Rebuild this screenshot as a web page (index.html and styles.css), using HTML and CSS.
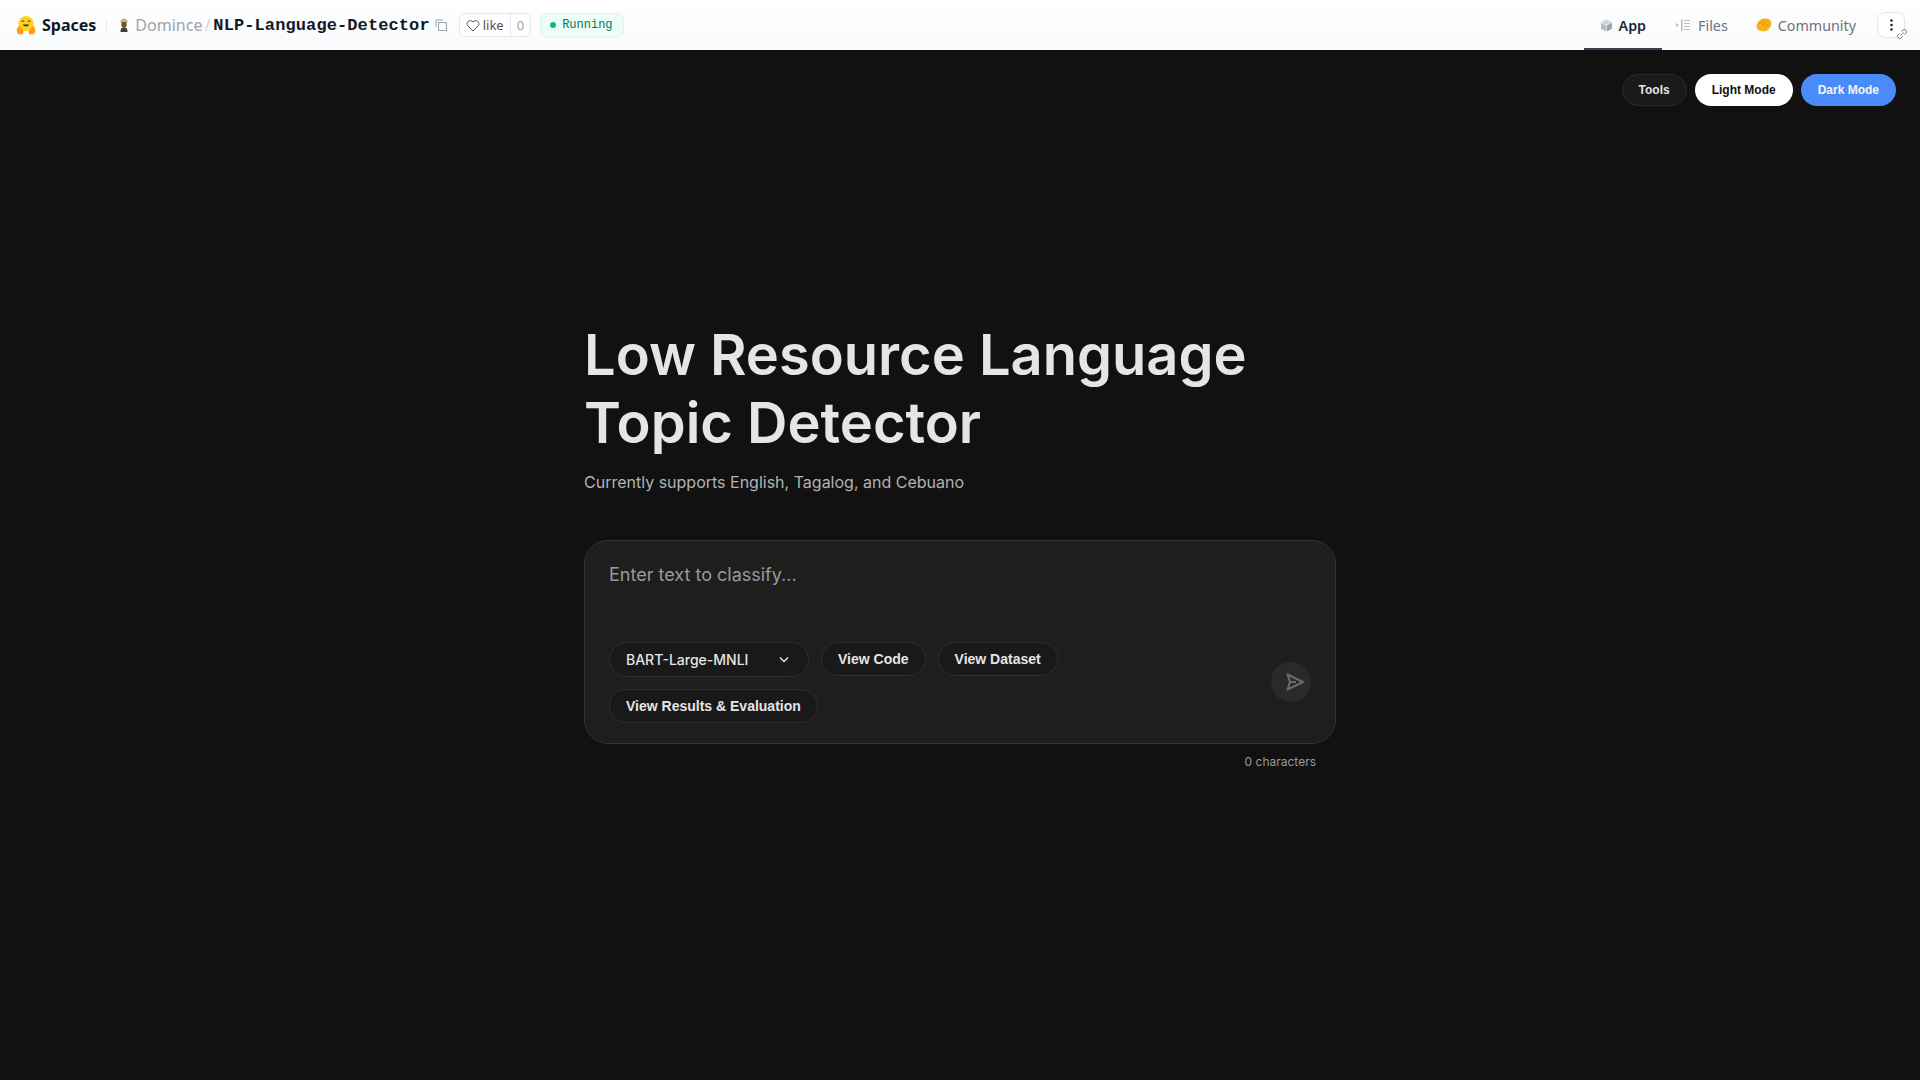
FILE: index.html
```html
<html>
<head>
    <title>Low Resource Language Topic Detector</title>
    <link rel="stylesheet" href="styles.css">
</head>
<body>
    <header class="topbar">
        <div class="topbar-left">
            <a class="brand">
                <svg class="brand-logo" viewBox="0 0 20 20" width="20" height="20">
                    <circle cx="10" cy="8.500" r="7.500" fill="#ffd21e"/>
                    <path d="M.8 15.500C.8 13 2.500 10.500 4 11.500l3.500 4.500-.5 3.200H3C1.500 19.200.8 17 .8 15.500zM19.200 15.500c0-2.500-1.700-5-3.200-4l-3.500 4.500.5 3.200h4c1.500 0 2.200-2.200 2.200-3.700z" fill="#ff9d0b"/>
                    <path d="M5.600 6.800c.3-1.500 2-1.500 2.300 0M12.100 6.800c.3-1.500 2-1.500 2.300 0" fill="none" stroke="#32343d" stroke-width="1"/>
                    <path d="M6.800 9.500c.8 2.600 5.600 2.600 6.400 0z" fill="#32343d"/>
                </svg>
                <span>Spaces</span>
            </a>
            <span class="divider"></span>
            <svg class="avatar" viewBox="0 0 10 14" width="10" height="14">
                <path d="M1.500 14c0-3.500 1-4.500 3.500-4.500s3.500 1 3.500 4.500z" fill="#4a3a2c"/>
                <ellipse cx="5" cy="6.500" rx="2.700" ry="3.300" fill="#6b4f36"/>
                <path d="M1.300 5C1 2 3 .5 5 .5S9 2 8.700 5C7.500 3.800 2.500 3.800 1.300 5z" fill="#c9ad7c"/>
            </svg>
            <span class="owner">Domince</span>
            <span class="slash">/</span>
            <span class="repo">NLP-Language-Detector</span>
            <svg class="copy-icon" viewBox="0 0 12 12" width="12" height="12" fill="none" stroke="#9ca3af" stroke-width="1">
                <rect x="3.500" y="3.500" width="8" height="8"/>
                <path d="M1 8V1h7"/>
            </svg>
            <div class="like">
                <span class="like-label">
                    <svg viewBox="0 0 14 13" width="14" height="13" fill="none" stroke="#4b5563" stroke-width="1">
                        <path d="M7 12L1.700 6.700C-.5 3.500 3.800-.5 7 3c3.200-3.500 7.500.5 5.300 3.700z"/>
                    </svg>
                    like
                </span>
                <span class="like-count">0</span>
            </div>
            <div class="status"><span class="status-dot"></span>Running</div>
        </div>
        <nav class="tabs">
            <a class="tab tab-active">
                <svg viewBox="0 0 12 12" width="13" height="13">
                    <path d="M6 .5l5 2.500L6 5.500 1 3z" fill="#d1d5db"/>
                    <path d="M1 3.500l4.700 2.400v5.600L1 9z" fill="#b6bcc6"/>
                    <path d="M11 3.500L6.300 5.900v5.600L11 9z" fill="#9ca3af"/>
                </svg>
                App
            </a>
            <a class="tab tab-files">
                <svg viewBox="0 0 14 12" width="14" height="12" fill="#b6bcc6">
                    <path d="M0 4l3 2-3 2z"/>
                    <rect x="5" y="0" width="1.500" height="12"/>
                    <rect x="8" y="1" width="6" height="1"/>
                    <rect x="8" y="4" width="6" height="1"/>
                    <rect x="8" y="7" width="6" height="1"/>
                    <rect x="8" y="10" width="6" height="1"/>
                </svg>
                Files
            </a>
            <a class="tab">
                <svg viewBox="0 0 16 14" width="16" height="14">
                    <path d="M.5 9C.3 6 2.500 2.500 5 1.500 7 .3 9.500.2 11.500.8c2 .5 4 2 4 4.200 0 3-2 6-4.500 7.500-1.500 1-4 1-6 .5C2.500 12.500.7 11 .5 9z" fill="#f5b21a"/>
                    <path d="M3.500 6L7 2.500M6 8l4-4.500M8.500 10l4-4.500" stroke="#cf8a08" stroke-width=".9" fill="none"/>
                </svg>
                Community
            </a>
            <div class="more">
                <svg viewBox="0 0 3 12" width="3" height="12" fill="#1f2937">
                    <circle cx="1.500" cy="1.500" r="1.300"/>
                    <circle cx="1.500" cy="6" r="1.300"/>
                    <circle cx="1.500" cy="10.500" r="1.300"/>
                </svg>
                <svg class="link-badge" viewBox="0 0 12 12" width="12" height="12" fill="none" stroke="#6b7280" stroke-width="1">
                    <path d="M4.500 7.500l3-3"/>
                    <path d="M5.500 3.500l1.500-1.500c1.800-1.800 4.800 1.200 3 3L8.500 6.500"/>
                    <path d="M6.500 8.500L5 10c-1.800 1.800-4.800-1.200-3-3l1.500-1.500"/>
                </svg>
            </div>
        </nav>
    </header>

    <main class="app">
        <div class="theme-bar">
            <button class="pill pill-tools">Tools</button>
            <button class="pill pill-light">Light Mode</button>
            <button class="pill pill-dark">Dark Mode</button>
        </div>
        <section class="content">
            <h1>Low Resource Language Topic Detector</h1>
            <p class="subtitle">Currently supports English, Tagalog, and Cebuano</p>
            <div class="card">
                <div class="placeholder">Enter text to classify...</div>
                <div class="card-footer">
                    <div class="actions">
                        <div class="select">
                            <span>BART-Large-MNLI</span>
                            <svg viewBox="0 0 12 8" width="10" height="7" fill="none" stroke="#e5e5e5" stroke-width="1.600">
                                <path d="M1 1.500l5 5 5-5"/>
                            </svg>
                        </div>
                        <button class="action">View Code</button>
                        <button class="action">View Dataset</button>
                        <button class="action">View Results &amp; Evaluation</button>
                    </div>
                    <div class="send">
                        <svg viewBox="0 0 20 20" width="20" height="20" fill="none" stroke="#6b6b6b" stroke-width="2" stroke-linejoin="round">
                            <path d="M2.500 2.500L18 10 2.500 17.500 5 10z"/>
                            <path d="M5 10h6"/>
                        </svg>
                    </div>
                </div>
            </div>
            <div class="counter">0 characters</div>
        </section>
    </main>
</body>
</html>
```

FILE: styles.css
```css
* {
    box-sizing: border-box;
}
body {
    margin: 0;
    height: 1080px;
    overflow: hidden;
    background-color: #111111;
    font-family: Inter, sans-serif;
    display: flex;
    flex-direction: column;
}
.topbar {
    height: 50px;
    flex-shrink: 0;
    background: linear-gradient(#ffffff, #f9fafb);
    display: flex;
    justify-content: space-between;
    padding: 0 15px 0 16px;
    font-family: "Noto Sans", sans-serif;
}
.topbar-left {
    display: flex;
    align-items: center;
}
.brand {
    display: flex;
    align-items: center;
    gap: 6px;
    font-size: 16px;
    font-weight: 700;
    color: #111827;
}
.divider {
    width: 1px;
    height: 10px;
    background-color: #e5e7eb;
    margin: 0 10px;
}
.avatar {
    margin: 0 6px 0 2px;
}
.owner {
    font-size: 16px;
    color: #9ca3af;
}
.slash {
    font-size: 16px;
    color: #d1d5db;
    margin: 0 2px;
}
.repo {
    font-family: "Liberation Mono", monospace;
    font-size: 17px;
    font-weight: 700;
    letter-spacing: 0.1px;
    color: #111827;
    padding-left: 1px;
}
.copy-icon {
    margin-left: 5px;
}
.like {
    display: flex;
    align-items: stretch;
    height: 24px;
    margin-left: 12px;
    border: 1px solid #e5e7eb;
    border-radius: 6px;
    background-color: #ffffff;
    font-size: 13px;
    color: #4b5563;
}
.like-label {
    display: flex;
    align-items: center;
    gap: 3px;
    padding: 0 6px;
}
.like-count {
    display: flex;
    align-items: center;
    padding: 0 6px;
    border-left: 1px solid #e5e7eb;
    color: #9ca3af;
}
.status {
    display: flex;
    align-items: center;
    gap: 6px;
    height: 25px;
    margin-left: 9px;
    padding: 0 10px 0 9px;
    border: 1px solid #dcf7eb;
    border-radius: 7px;
    background-color: #ecfdf5;
    font-family: "Liberation Mono", monospace;
    font-size: 12px;
    color: #047857;
}
.status-dot {
    width: 6px;
    height: 6px;
    border-radius: 50%;
    background-color: #10b981;
}
.tabs {
    display: flex;
    align-items: stretch;
}
.tab {
    display: flex;
    align-items: center;
    gap: 6px;
    padding: 0 14px;
    font-size: 14.300px;
    color: #6b7280;
}
.tab-active {
    font-weight: 600;
    color: #1f2937;
    border-bottom: 2px solid #374151;
    padding: 2px 16px 0;
}
.tab-files {
    gap: 8px;
}
.more {
    position: relative;
    align-self: center;
    display: flex;
    align-items: center;
    justify-content: center;
    width: 28px;
    height: 26px;
    margin-left: 7px;
    border: 1px solid #e5e7eb;
    border-radius: 8px;
    background-color: #ffffff;
}
.link-badge {
    position: absolute;
    right: -4px;
    bottom: -3px;
}
.app {
    flex: 1;
    position: relative;
    display: flex;
    flex-direction: column;
    align-items: center;
    justify-content: center;
    padding-bottom: 36px;
}
.theme-bar {
    position: absolute;
    top: 24px;
    right: 24px;
    display: flex;
    gap: 8px;
}
.pill {
    height: 32px;
    padding: 0 16px;
    border-radius: 16px;
    font-family: "Liberation Sans", Arial, sans-serif;
    font-size: 12px;
    font-weight: 700;
    border: 1px solid transparent;
}
.pill-tools {
    background-color: #1a1a1a;
    border-color: #2a2a2a;
    color: #e5e5e5;
}
.pill-light {
    background-color: #ffffff;
    color: #111111;
}
.pill-dark {
    background-color: #4a8bfa;
    color: #f5f5f5;
}
.content {
    width: 752px;
}
h1 {
    margin: 0;
    font-size: 56px;
    font-weight: 600;
    line-height: 67.200px;
    color: #e5e5e5;
}
.subtitle {
    margin: 13px 0 0;
    font-size: 16px;
    line-height: 24px;
    color: #b3b3b3;
}
.card {
    margin-top: 46px;
    height: 204px;
    padding: 21px 24px 20px;
    background-color: #1e1e1e;
    border: 1px solid #333333;
    border-radius: 24px;
    display: flex;
    flex-direction: column;
    justify-content: space-between;
}
.placeholder {
    font-size: 18px;
    line-height: 26px;
    color: #999999;
}
.card-footer {
    display: flex;
    justify-content: space-between;
    align-items: center;
}
.actions {
    display: flex;
    flex-wrap: wrap;
    align-items: center;
    gap: 12px;
    width: 500px;
}
.select {
    display: flex;
    align-items: center;
    justify-content: space-between;
    width: 200px;
    height: 35px;
    padding: 0 19px 0 16px;
    background-color: #191919;
    border: 1px solid #2e2e2e;
    border-radius: 18px;
    font-size: 14px;
    font-weight: 500;
    color: #e5e5e5;
}
.action {
    height: 34px;
    padding: 0 16px;
    background-color: #191919;
    border: 1px solid #2e2e2e;
    border-radius: 17px;
    font-family: "Liberation Sans", Arial, sans-serif;
    font-size: 14px;
    font-weight: 700;
    color: #e5e5e5;
}
.send {
    width: 40px;
    height: 40px;
    display: flex;
    align-items: center;
    justify-content: center;
    border-radius: 50%;
    background-color: #2a2a2a;
    padding-left: 7px;
}
.counter {
    margin-top: 8px;
    padding-right: 20px;
    text-align: right;
    font-size: 12px;
    line-height: 20px;
    color: #999999;
}
```
